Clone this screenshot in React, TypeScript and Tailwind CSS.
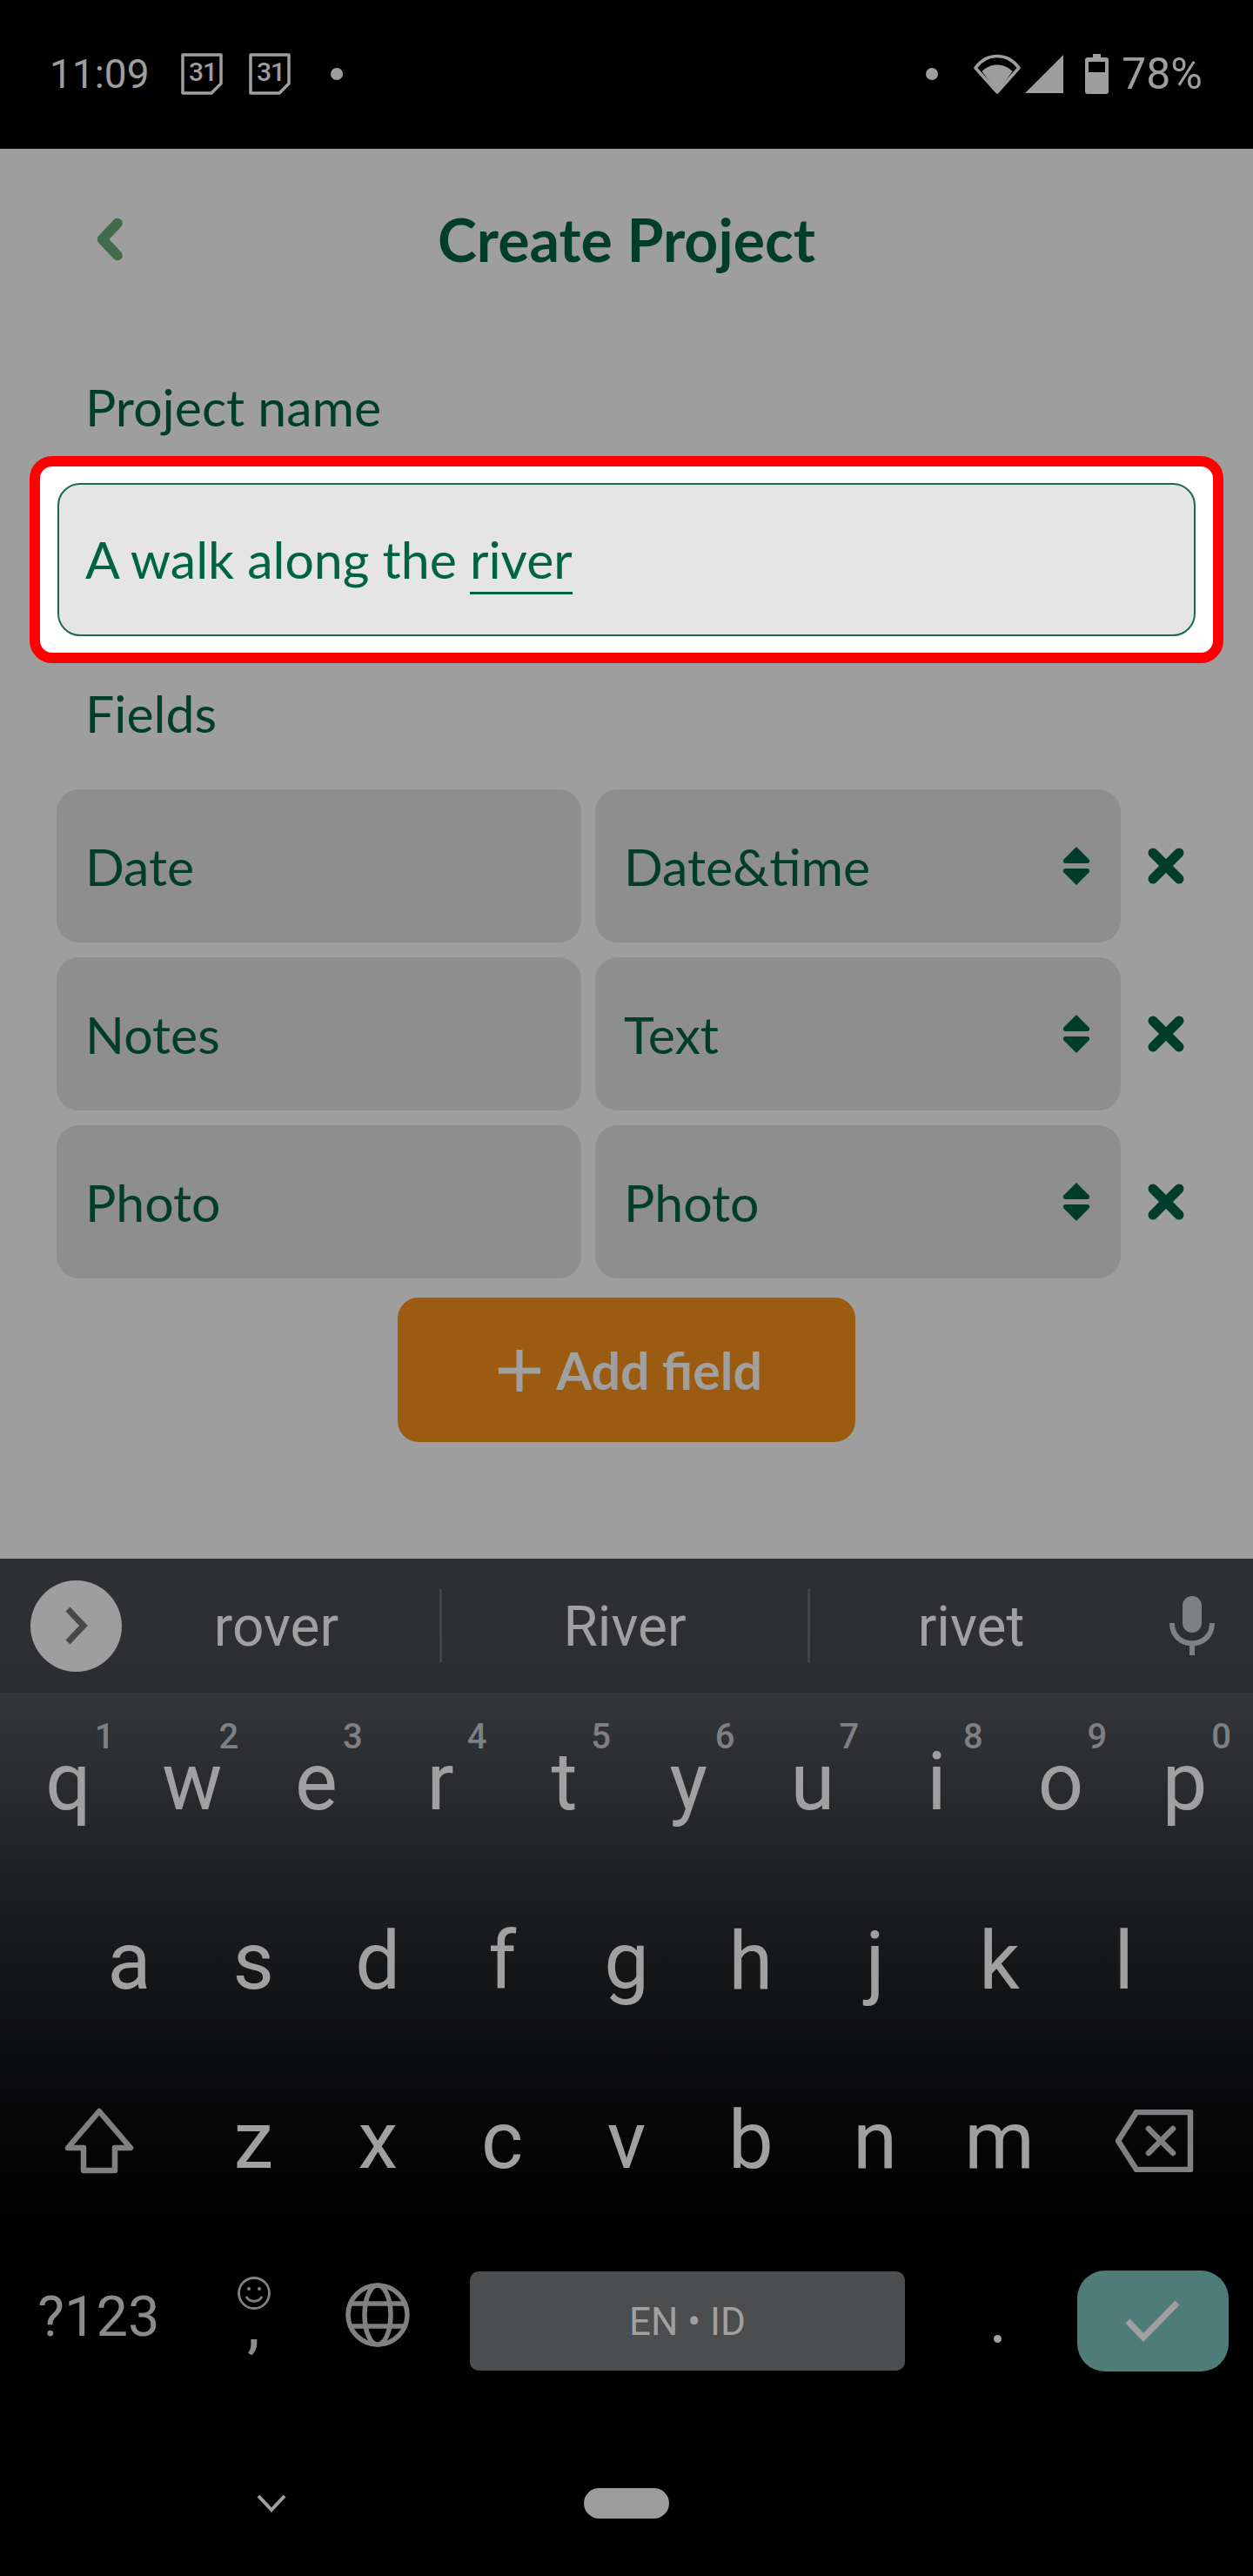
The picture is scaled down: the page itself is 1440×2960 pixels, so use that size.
const lato = { fontFamily: '"Lato", sans-serif' };

function Cal() {
  return (
    <div className="relative w-[48px] h-[48px]">
      <svg width="48" height="48" viewBox="0 0 48 48" fill="none" stroke="#9e9e9e" strokeWidth="3.5" strokeLinejoin="round">
        <path d="M2 2H46V35L35 46H2Z" />
      </svg>
      <span className="absolute left-[9px] top-[7px] text-[30px] leading-[30px] tracking-[-1px] font-medium text-[#9e9e9e] font-['Roboto',sans-serif]">31</span>
    </div>
  );
}

function UpDown() {
  return (
    <svg width="34" height="46" viewBox="0 0 34 46" fill="#003d2b" className="shrink-0">
      <path d="M17 1L32 16Q33 20 29 20H5Q1 20 2 16Z" />
      <path d="M5 26H29Q33 26 32 30L17 45L2 30Q1 26 5 26Z" />
    </svg>
  );
}

function Close() {
  return (
    <svg width="44" height="42" viewBox="0 0 44 42" fill="none" stroke="#003d2b" strokeWidth="11" strokeLinecap="round" className="shrink-0">
      <path d="M7 6L37 36M37 6L7 36" />
    </svg>
  );
}

function FieldRow({ name, type }: { name: string; type: string }) {
  return (
    <div className="flex items-center h-[176px]">
      <div className="w-[603px] h-full rounded-[26px] bg-[#8e8e8e] pl-[33px] pt-[2px] flex items-center text-[59px] text-[#003d2b]" style={lato}>{name}</div>
      <div className="ml-[16px] w-[604px] h-full rounded-[26px] bg-[#8e8e8e] pl-[33px] pr-[34px] flex items-center justify-between text-[59px] text-[#003d2b]" style={lato}>
        <span className="pt-[2px]">{type}</span>
        <UpDown />
      </div>
      <div className="ml-[30px]"><Close /></div>
    </div>
  );
}

function Key({ l, n, cls }: { l: string; n?: string; cls?: string }) {
  return (
    <div className={"relative flex items-center justify-center h-[206px] text-[#a0a0a0] text-[92px] font-['Roboto',sans-serif] " + (cls ?? "flex-1")}>
      <span className="leading-none">{l}</span>
      {n && <span className="absolute right-[18px] top-[31px] text-[40px] leading-none font-medium text-[#7f8082]">{n}</span>}
    </div>
  );
}

export default function App() {
  return (
    <div className="w-[1440px] h-[2960px] bg-black overflow-hidden flex flex-col">
      {/* status bar */}
      <div className="h-[171px] shrink-0 bg-black flex items-center pl-[57px] pr-[58px] pb-[1px] text-[#9e9e9e] font-['Roboto',sans-serif]">
        <span className="w-[111px] leading-none text-[46px]">11:09</span>
        <div className="ml-[40px]"><Cal /></div>
        <div className="ml-[30px]"><Cal /></div>
        <div className="ml-[46px] w-[14px] h-[14px] rounded-full bg-[#9e9e9e]" />
        <div className="flex-1" />
        <div className="w-[14px] h-[14px] rounded-full bg-[#9e9e9e]" />
        <svg className="ml-[41px]" width="54" height="46" viewBox="0 0 54 46">
          <path d="M27 44L2 16C15 -2 39 -2 52 16Z" fill="none" stroke="#9e9e9e" strokeWidth="3.5" strokeLinejoin="round" />
          <path d="M27 44L9.5 20C19 10 35 10 44.5 20Z" fill="#9e9e9e" />
        </svg>
        <svg className="ml-[5px]" width="44" height="44" viewBox="0 0 44 44"><path d="M44 0V44H0Z" fill="#9e9e9e" /></svg>
        <svg className="ml-[25px]" width="27" height="46" viewBox="0 0 27 46">
          <path d="M9 0H18V4H24Q27 4 27 7V43Q27 46 24 46H3Q0 46 0 43V7Q0 4 3 4H9Z" fill="#9e9e9e" />
          <rect x="4" y="9" width="19" height="12" fill="#000" />
        </svg>
        <span className="ml-[15px] leading-none text-[50px]">78%</span>
      </div>

      {/* app */}
      <div className="h-[1620px] shrink-0 bg-[#9e9e9e] flex flex-col">
        <div className="relative h-[120px] mt-[44px] flex items-center justify-center">
          <svg className="absolute left-[110px] top-[35px]" width="32" height="50" viewBox="0 0 32 50" fill="none" stroke="#426b4b" strokeWidth="11.5" strokeLinecap="round" strokeLinejoin="round">
            <path d="M25 6.5L7.5 25L25 43.5" />
          </svg>
          <h1 className="text-[68px] font-bold text-[#003d2b] leading-none" style={lato}>Create Project</h1>
        </div>
        <div className="pl-[98px] mt-[99px] text-[59px] leading-[68px] text-[#003d2b]" style={lato}>Project name</div>

        <div className="mx-[34px] mt-[22px] h-[238px] rounded-[26px] border-[12px] border-[#ff0000] bg-white px-[20px] py-[19px]">
          <div className="h-[176px] rounded-[26px] border-2 border-[#1a6a50] bg-[#e5e5e5] pl-[30px] flex items-center text-[59px] text-[#006344]" style={lato}>
            A walk along the&nbsp;<span className="border-b-[3px] border-[#006344] pb-[2px] mt-[4px] leading-[70px]">river</span>
          </div>
        </div>

        <div className="pl-[98px] mt-[24px] text-[59px] leading-[68px] text-[#003d2b]" style={lato}>Fields</div>

        <div className="pl-[65px] mt-[53px] flex flex-col gap-[17px]">
          <FieldRow name="Date" type="Date&time" />
          <FieldRow name="Notes" type="Text" />
          <FieldRow name="Photo" type="Photo" />
        </div>

        <div className="mt-[22px] flex justify-center">
          <div className="w-[526px] h-[166px] rounded-[24px] bg-[#9b5c11] pl-[8px] pt-[2px] flex items-center justify-center text-[#a0a0a0] text-[59px] font-bold" style={lato}>
            <svg className="mr-[17px]" width="50" height="50" viewBox="0 0 50 50" fill="none" stroke="#a0a0a0" strokeWidth="7"><path d="M25 1V49M1 25H49" /></svg>
            Add field
          </div>
        </div>
      </div>

      {/* keyboard */}
      <div className="flex-1 flex flex-col">
        <div className="h-[154px] shrink-0 bg-gradient-to-b from-[#303134] to-[#2c2d30] flex items-center text-[#a0a0a0] text-[64px] font-['Roboto',sans-serif]">
          <div className="ml-[35px] w-[105px] h-[105px] rounded-full bg-[#9e9e9e] flex items-center justify-center shrink-0">
            <svg width="30" height="44" viewBox="0 0 30 44" fill="none" stroke="#47484a" strokeWidth="7"><path d="M5 3L23 22L5 41" /></svg>
          </div>
          <div className="w-[365px] pr-[10px] pt-[3px] text-center leading-none">rover</div>
          <div className="w-[3px] h-[84px] bg-[#434447]" />
          <div className="w-[420px] pt-[3px] text-center leading-none">River</div>
          <div className="w-[3px] h-[84px] bg-[#434447]" />
          <div className="w-[370px] pt-[3px] text-center leading-none">rivet</div>
          <svg className="ml-[43px]" width="52" height="68" viewBox="0 0 52 68">
            <rect x="15" y="0" width="22" height="42" rx="11" fill="#7f8082" />
            <path d="M3 31C3 62 49 62 49 31" fill="none" stroke="#7f8082" strokeWidth="6" />
            <rect x="23" y="52" width="6" height="16" fill="#7f8082" />
          </svg>
        </div>
        <div className="flex-1 bg-gradient-to-b from-[#34363a] to-black to-[79%] flex flex-col">
          <div className="flex px-[7px]">
            <Key l="q" n="1" /><Key l="w" n="2" /><Key l="e" n="3" /><Key l="r" n="4" /><Key l="t" n="5" />
            <Key l="y" n="6" /><Key l="u" n="7" /><Key l="i" n="8" /><Key l="o" n="9" /><Key l="p" n="0" />
          </div>
          <div className="flex px-[77px]">
            {"asdfghjkl".split("").map((c) => <Key key={c} l={c} />)}
          </div>
          <div className="flex px-[7px]">
            <div className="w-[213px] flex items-center justify-center">
              <svg width="80" height="76" viewBox="0 0 80 76" fill="none" stroke="#7f8082" strokeWidth="6.5" strokeLinejoin="round">
                <path d="M40 4L76 46H58V72H22V46H4Z" />
              </svg>
            </div>
            {"zxcvbnm".split("").map((c) => <Key key={c} l={c} />)}
            <div className="w-[213px] flex items-center justify-center">
              <svg width="90" height="72" viewBox="0 0 90 72" fill="none" stroke="#7f8082" strokeWidth="6.5" strokeLinejoin="round" strokeLinecap="round">
                <path d="M24 3H86V69H24L3 36Z" />
                <path d="M38 22L66 50M66 22L38 50" />
              </svg>
            </div>
          </div>
          <div className="flex items-center h-[120px] mt-[44px] px-[7px] text-[#8a8b8c] font-['Roboto',sans-serif]">
            <div className="w-[213px] mb-[10px] text-center text-[65px] leading-none">?123</div>
            <div className="w-[143px] mb-[24px] flex flex-col items-center">
              <svg width="38" height="38" viewBox="0 0 38 38" fill="none" stroke="#7f8082" strokeWidth="2.8">
                <circle cx="19" cy="19" r="17.5" /><path d="M10 23C14 30 24 30 28 23" />
                <circle cx="13" cy="14" r="2" fill="#7f8082" stroke="none" /><circle cx="25" cy="14" r="2" fill="#7f8082" stroke="none" />
              </svg>
              <span className="text-[66px] font-medium leading-[40px] text-[#8a8b8c]">,</span>
            </div>
            <div className="w-[141px] mr-[2px] mb-[14px] flex justify-center">
              <svg width="74" height="74" viewBox="0 0 74 74" fill="none" stroke="#7f8082" strokeWidth="5.5">
                <circle cx="37" cy="37" r="34" /><ellipse cx="37" cy="37" rx="15" ry="34" />
                <path d="M6 24H68M6 50H68" />
              </svg>
            </div>
            <div className="ml-[34px] w-[500px] h-[114px] pt-[2px] rounded-[10px] bg-[#4c4d4f] flex items-center justify-center text-[44px] text-[#a0a0a0]">EN • ID</div>
            <div className="flex-1 flex items-end justify-center h-[114px] pb-[32px] pl-[14px]"><div className="w-[9px] h-[9px] rounded-full bg-[#a0a0a0]" /></div>
            <div className="w-[174px] h-[116px] mr-[21px] rounded-[32px] bg-[#4f7c78] flex items-center justify-center shrink-0">
              <svg width="62" height="48" viewBox="0 0 62 48" fill="none" stroke="#a0a0a0" strokeWidth="7"><path d="M2 24L20 43L59 3" /></svg>
            </div>
          </div>
          <div className="flex-1 flex items-center pl-[295px] pt-[65px]">
            <svg width="34" height="21" viewBox="0 0 34 21" fill="none" stroke="#9e9e9e" strokeWidth="4"><path d="M2 2L17 18L32 2" /></svg>
            <div className="ml-[342px] w-[98px] h-[35px] rounded-full bg-[#9c9c9c]" />
          </div>
        </div>
      </div>
    </div>
  );
}
